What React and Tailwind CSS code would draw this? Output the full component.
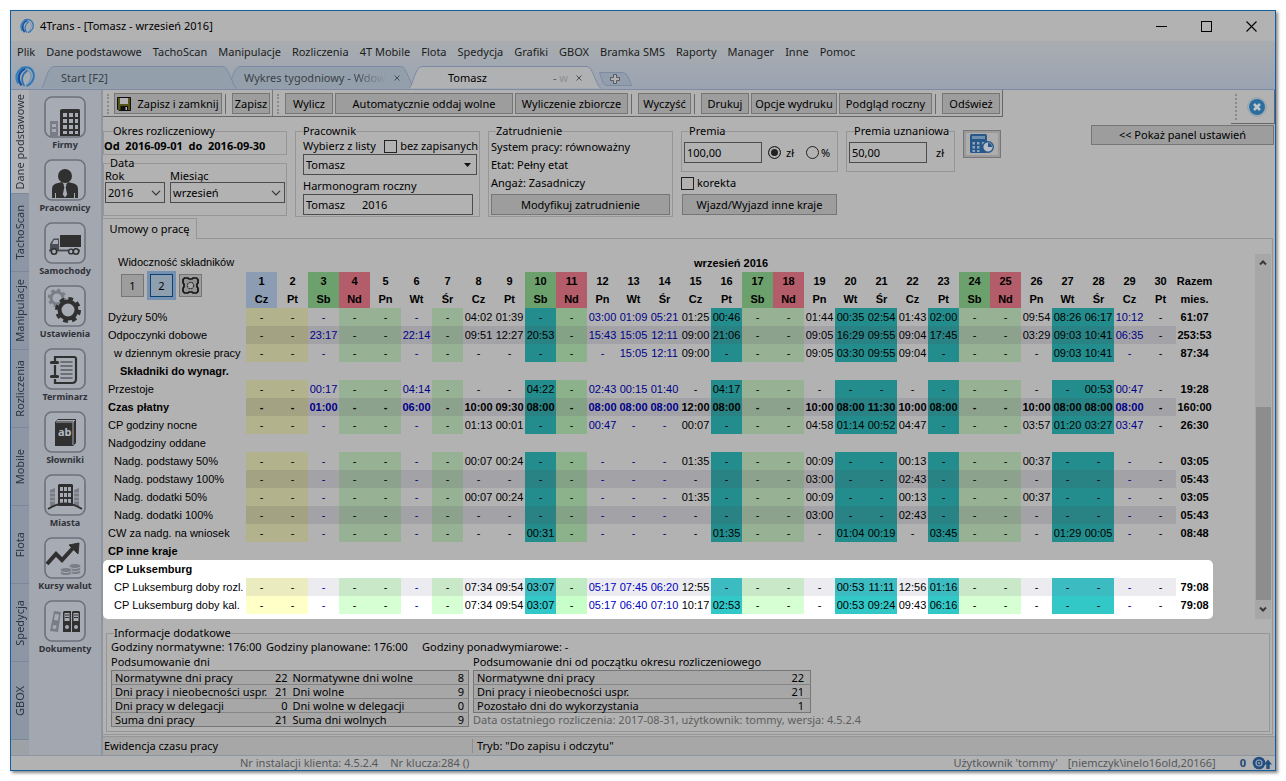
import React from "react";

const UI = "font-['Noto_Sans','Open_Sans',sans-serif]";

const menu = ["Plik", "Dane podstawowe", "TachoScan", "Manipulacje", "Rozliczenia", "4T Mobile", "Flota", "Spedycja", "Grafiki", "GBOX", "Bramka SMS", "Raporty", "Manager", "Inne", "Pomoc"];
const sideTabs = ["TachoScan", "Manipulacje", "Rozliczenia", "Mobile", "Flota", "Spedycja", "GBOX"];

function Logo({ className }) {
  return (
    <svg viewBox="0 0 20 21" className={className} fill="none" aria-hidden="true">
      <path d="M12 4C16 7 17 14 11 20 7 14 8 8 12 4Z" fill="#a3adb8" />
      <path d="M3.500 17.500C-.5 11 2 4.500 8 2" stroke="#3580bd" strokeWidth="2.400" />
      <path d="M6.500 19.500C1.500 12 4 5.500 10.500 2.500" stroke="#164f9c" strokeWidth="2.200" />
      <path d="M9.500 20C5 13.500 7.500 7.500 12.500 4.500" stroke="#2a6fb0" strokeWidth="1.600" />
      <path d="M6 2.500C12-.5 17 2 18.500 7 20 13 16.500 18 11.500 20" stroke="#2f78b6" strokeWidth="2" />
      <path d="M10 3.500C15 3.500 17.500 9 15.500 13 14.500 16 13 18 11.500 19.500" stroke="#5d8fb8" strokeWidth="1" />
    </svg>
  );
}

const D = "#303030";
const G = "#7a7d86";
const F = "#a7abb4";

const modules = [
  ["Firmy", (
    <g>
      <path d="M6 25h8v15H6z" fill={G} />
      <path d="M8 28h4v3H8zM8 33h4v3H8z" fill={F} />
      <path d="M18 13h17l1 1v26H16V14z" fill={D} />
      <path d="M19 17h4v4h-4zM25 17h4v4h-4zM31 17h3v4h-3zM19 23h4v4h-4zM25 23h4v4h-4zM31 23h3v4h-3zM19 29h4v4h-4zM25 29h4v4h-4zM31 29h3v4h-3zM19 35h4v3h-4zM25 35h4v3h-4zM31 35h3v3h-3z" fill={F} />
    </g>
  )],
  ["Pracownicy", (
    <g>
      <circle cx="21" cy="17" r="7" fill={D} />
      <path d="M8 39V30q0-5 6-6l4-1 3 4 3-4 4 1q6 1 6 6v9h-3v-5h-1v5H12v-5h-1v5z" fill={D} />
      <path d="M19.500 25.500h3l-.8 3 1.500 7-2.200 3-2.200-3 1.500-7z" fill={F} />
    </g>
  )],
  ["Samochody", (
    <g>
      <path d="M16 13h21v12H16z" fill={D} />
      <path d="M15 16.500H9.500L6 22v6.500h9z" fill="#4b4e56" />
      <path d="M10 18h4v4H8z" fill={F} />
      <path d="M5 28.500h31" stroke="#45484f" strokeWidth="1.800" />
      <circle cx="10" cy="29.500" r="2.700" fill={F} stroke={D} strokeWidth="1.600" />
      <circle cx="27" cy="29.500" r="2.400" fill={F} stroke={D} strokeWidth="1.400" />
      <circle cx="32" cy="29.500" r="2.700" fill={F} stroke={D} strokeWidth="1.600" />
    </g>
  )],
  ["Ustawienia", (
    <g fill="none">
      <circle cx="13" cy="13" r="6" stroke={G} strokeWidth="3" />
      <circle cx="13" cy="13" r="8" stroke={G} strokeWidth="2.500" strokeDasharray="3.200 3.080" />
      <circle cx="24" cy="25" r="10" fill={F} />
      <circle cx="24" cy="25" r="8.500" stroke={D} strokeWidth="4" />
      <circle cx="24" cy="25" r="11.500" stroke={D} strokeWidth="3" strokeDasharray="4.800 4.230" />
    </g>
  )],
  ["Terminarz", (
    <g>
      <path d="M11 9h19q2 0 2 2v20q0 4-4 4H11z" fill="none" stroke={D} strokeWidth="2.200" />
      <path d="M8 15h6M8 29h6" stroke={F} strokeWidth="4" />
      <path d="M7.500 14.500h6M7.500 28.500h6" stroke={D} strokeWidth="3.200" strokeLinecap="round" />
      <path d="M17 14h11M17 18h11M17 22h11M17 26h11M17 30h11" stroke="#5a5d62" strokeWidth="1.600" strokeLinecap="round" />
    </g>
  )],
  ["Słowniki", (
    <g>
      <path d="M11 11l3-3h18v24l-3 3H11z" fill={D} />
      <path d="M12 11h17v23M29 11l2-2M13 9.500h17" fill="none" stroke={F} strokeWidth="1" />
      <text x="14" y="25" fontSize="11" fontWeight="700" fill="#b4b8c0" className="font-['Noto_Sans',sans-serif]">ab</text>
    </g>
  )],
  ["Miasta", (
    <g>
      <path d="M6 16l5-2v18H6zM30 16l5-2v18h-5z" fill={G} />
      <path d="M6 19h5M6 23h5M6 27h5M30 19h5M30 23h5M30 27h5" stroke={F} strokeWidth="1" />
      <path d="M15 10h13l1 1v21H14V11z" fill={D} />
      <path d="M16 13h3v4h-3zM20 13h3v4h-3zM24 13h3v4h-3zM16 19h3v4h-3zM20 19h3v4h-3zM24 19h3v4h-3zM16 25h3v4h-3zM20 25h3v4h-3zM24 25h3v4h-3z" fill={F} />
      <path d="M4 35q17-11 34 0" fill="none" stroke={D} strokeWidth="2" />
    </g>
  )],
  ["Kursy walut", (
    <g>
      <path d="M3 27l9-10 6 6 11-12" fill="none" stroke={D} strokeWidth="4" />
      <path d="M25 8l10-2-1 11z" fill={D} stroke={D} />
      <g fill={G} stroke={F} strokeWidth="1">
        <ellipse cx="31" cy="35" rx="6" ry="2.500" /><ellipse cx="31" cy="32" rx="6" ry="2.500" /><ellipse cx="31" cy="29" rx="6" ry="2.500" />
        <ellipse cx="22" cy="36" rx="6" ry="2.500" /><ellipse cx="22" cy="33" rx="6" ry="2.500" />
      </g>
    </g>
  )],
  ["Dokumenty", (
    <g>
      <path d="M10 11l7 1-3 20-8-1z" fill={G} />
      <path d="M11 14l4 .6-1 6-4-.6z" fill={F} />
      <circle cx="10.500" cy="27" r="2" fill={F} />
      <path d="M20 11h7v21h-8V12zM29 11h6l1 1v20h-8V12z" fill={D} />
      <path d="M20.500 13h5v8h-5zM29.500 13h5v8h-5z" fill={F} />
      <path d="M21 15h4M21 17.500h4M30 15h4M30 17.500h4" stroke={D} strokeWidth="1" />
      <circle cx="23" cy="27" r="2" fill={F} /><circle cx="32" cy="27" r="2" fill={F} />
    </g>
  )],
];

const weekday = ["Cz", "Pt", "Sb", "Nd", "Pn", "Wt", "Śr"];
const days = Array.from({ length: 30 }, (_, i) => ({ n: i + 1, name: weekday[i % 7] }));

const kinds = "yywggwgwwtcwwwwtggwttwtggwttww".split("");
const blueDays = [3, 6, 12, 13, 14, 29];
const shade = {
  dim: {
    plain: { y: "bg-[#b2b28c]", w: "bg-[#b2b2b2]", g: "bg-[#96b194]", c: "bg-[#8cb28c]", t: "bg-[#238c8c]" },
    stripe: { y: "bg-[#a3a384]", w: "bg-[#a3a3a7]", g: "bg-[#8ca28c]", c: "bg-[#84a386]", t: "bg-[#298385]" },
  },
  lit: {
    plain: { y: "bg-[#ffffc8]", w: "bg-white", g: "bg-[#d7ffd4]", c: "bg-[#c8ffc8]", t: "bg-[#32c8c8]" },
    stripe: { y: "bg-[#ebebc0]", w: "bg-[#ebebf0]", g: "bg-[#c8e8c8]", c: "bg-[#bfebc2]", t: "bg-[#3cbcc0]" },
  },
};

const rows = [
  { label: "Dyżury 50%", v: "8=04:02 9=01:39 12=03:00 13=01:09 14=05:21 15=01:25 16=00:46 19=01:44 20=00:35 21=02:54 22=01:43 23=02:00 26=09:54 27=08:26 28=06:17 29=10:12", sum: "61:07" },
  { label: "Odpoczynki dobowe", stripe: true, v: "3=23:17 6=22:14 8=09:51 9=12:27 10=20:53 12=15:43 13=15:05 14=12:11 15=09:00 16=21:06 19=09:05 20=16:29 21=09:55 22=09:04 23=17:45 26=03:29 27=09:03 28=10:41 29=06:35", sum: "253:53" },
  { label: "w dziennym okresie pracy", pad: "pl-[11px]", v: "13=15:05 14=12:11 15=09:00 19=09:05 20=03:30 21=09:55 22=09:04 27=09:03 28=10:41", sum: "87:34" },
  { label: "Składniki do wynagr.", pad: "pl-[17px]", bold: true },
  { label: "Przestoje", v: "3=00:17 6=04:14 10=04:22 12=02:43 13=00:15 14=01:40 16=04:17 28=00:53 29=00:47", sum: "19:28" },
  { label: "Czas płatny", bold: true, stripe: true, v: "3=01:00 6=06:00 8=10:00 9=09:30 10=08:00 12=08:00 13=08:00 14=08:00 15=12:00 16=08:00 19=10:00 20=08:00 21=11:30 22=10:00 23=08:00 26=10:00 27=08:00 28=08:00 29=08:00", sum: "160:00" },
  { label: "CP godziny nocne", v: "8=01:13 9=00:01 12=00:47 15=00:07 19=04:58 20=01:14 21=00:52 22=04:47 26=03:57 27=01:20 28=03:27 29=03:47", sum: "26:30" },
  { label: "Nadgodziny oddane" },
  { label: "Nadg. podstawy 50%", pad: "pl-[11px]", v: "8=00:07 9=00:24 15=01:35 19=00:09 22=00:13 26=00:37", sum: "03:05" },
  { label: "Nadg. podstawy 100%", pad: "pl-[11px]", stripe: true, v: "19=03:00 22=02:43", sum: "05:43" },
  { label: "Nadg. dodatki 50%", pad: "pl-[11px]", v: "8=00:07 9=00:24 15=01:35 19=00:09 22=00:13 26=00:37", sum: "03:05" },
  { label: "Nadg. dodatki 100%", pad: "pl-[11px]", stripe: true, v: "19=03:00 22=02:43", sum: "05:43" },
  { label: "CW za nadg. na wniosek", v: "10=00:31 16=01:35 20=01:04 21=00:19 23=03:45 27=01:29 28=00:05", sum: "08:48" },
  { label: "CP inne kraje", bold: true },
];

const litRows = [
  { label: "CP Luksemburg", bold: true },
  { label: "CP Luksemburg doby rozl.", pad: "pl-[11px]", stripe: true, v: "8=07:34 9=09:54 10=03:07 12=05:17 13=07:45 14=06:20 15=12:55 20=00:53 21=11:11 22=12:56 23=01:16", sum: "79:08" },
  { label: "CP Luksemburg doby kal.", pad: "pl-[11px]", v: "8=07:34 9=09:54 10=03:07 12=05:17 13=06:40 14=07:10 15=10:17 16=02:53 20=00:53 21=09:24 22=09:43 23=06:16", sum: "79:08" },
];

function Row({ row, lit, first }) {
  const palette = shade[lit ? "lit" : "dim"][row.stripe ? "stripe" : "plain"];
  const side = lit ? "bg-white" : "";
  const values = row.v === undefined ? null : Object.fromEntries(row.v.split(" ").map((p) => p.split("=")));
  return (
    <tr className={`h-[18px] ${row.bold ? "font-bold" : ""}`}>
      <th scope="row" className={`${side} ${first ? "rounded-tl-[5px]" : ""} ${row.bold ? "font-bold" : "font-normal"} text-left`}>
        <div className={row.pad || "pl-[5px]"}>{row.label}</div>
      </th>
      {values
        ? kinds.map((k, i) => (
            <td key={i} className={`${palette[k]} ${blueDays.includes(i + 1) ? (lit ? "text-[#0000c0]" : "text-[#000086]") : ""}`}>
              {values[i + 1] || "-"}
            </td>
          ))
        : <td colSpan={30} className={side} />}
      <td className={`${side} ${first ? "rounded-tr-[5px]" : ""} font-bold`}>{row.sum}</td>
    </tr>
  );
}

function Btn({ children, className = "", label }) {
  return (
    <button type="button" aria-label={label} className={`flex items-center justify-center border border-[#767676] bg-[#9d9d9d] whitespace-nowrap ${className}`}>
      {children}
    </button>
  );
}

function Grip({ className = "h-5" }) {
  return <div className={`w-0 shrink-0 border-l-2 border-dotted border-[#8a8a8a] ${className}`} />;
}

function Sep() {
  return <div className="h-5 w-px bg-[#6a6a6a]" />;
}

function Group({ title, className = "", legend = "ml-2", children }) {
  return (
    <fieldset className={`min-w-0 border border-[#969696] ${className}`}>
      <legend className={`${legend} leading-[14px]`}>{title}</legend>
      {children}
    </fieldset>
  );
}

function Chevron() {
  return (
    <svg viewBox="0 0 10 6" className="pointer-events-none absolute top-2 right-1 h-1.5 w-2.5" aria-hidden="true">
      <path d="M1 .8l4 4 4-4" fill="none" stroke="#333" strokeWidth="1.200" />
    </svg>
  );
}

const field = "h-[21px] border border-[#4c4c4c] bg-[#b2b2b2] px-0.5";
const tick = "size-[13px] shrink-0 appearance-none border border-[#222] checked:bg-[#222]";
const radio = "size-[13px] shrink-0 appearance-none rounded-full border border-[#222] checked:bg-[#222] checked:shadow-[inset_0_0_0_2px_#b2b2b2]";

function TabShape({ w, fill }) {
  return (
    <svg width={w} height="23" viewBox={`0 0 ${w} 23`} className="absolute inset-0" aria-hidden="true">
      <path d={`M0 22.500C4 20 6 .5 13 .5H${w - 14}C${w - 8} .5 ${w - 5} 20 ${w} 22.500`} fill={fill} stroke="#7c8ba3" />
    </svg>
  );
}

function CloseMark({ className }) {
  return (
    <svg viewBox="0 0 6 6" className={`relative size-1.5 shrink-0 ${className}`} aria-hidden="true">
      <path d="M.5.5l5 5M5.500.5l-5 5" stroke="#4c4f55" strokeWidth="1" />
    </svg>
  );
}

const summaryLeft = [
  ["Normatywne dni pracy", 22, "Normatywne dni wolne", 8],
  ["Dni pracy i nieobecności uspr.", 21, "Dni wolne", 9],
  ["Dni pracy w delegacji", 0, "Dni wolne w delegacji", 0],
  ["Suma dni pracy", 21, "Suma dni wolnych", 9],
];
const summaryRight = [
  ["Normatywne dni pracy", 22],
  ["Dni pracy i nieobecności uspr.", 21],
  ["Pozostało dni do wykorzystania", 1],
];

export default function App() {
  return (
    <div className={`flex min-h-screen min-w-[1286px] bg-white p-2.5 text-[11px] leading-[14px] text-black ${UI}`}>
      <div className="flex flex-1 flex-col border border-[#12609f] bg-[#b2b2b2] shadow-[2px_2px_3px_#888]">
        <header className="flex h-[30px] items-center pl-[9px]">
          <Logo className="h-4 w-3.5" />
          <h1 className="ml-1.5 flex-1">4Trans - [Tomasz - wrzesień 2016]</h1>
          <div className="flex items-center gap-[34px] pr-[18px]">
            <button type="button" aria-label="Minimalizuj" className="flex size-[11px] items-center"><span className="h-px w-full bg-black" /></button>
            <button type="button" aria-label="Maksymalizuj" className="size-[11px] border border-black" />
            <button type="button" aria-label="Zamknij" className="size-[11px]">
              <svg viewBox="0 0 11 11"><path d="M.5.5l10 10M10.500.5l-10 10" stroke="#000" strokeWidth="1.100" /></svg>
            </button>
          </div>
        </header>

        <div className="border-b border-[#7c8ba3] bg-linear-to-b from-[#a9adb0] to-[#9aa3b1]">
          <nav className="flex h-[25px] items-start gap-[11px] pt-1 pl-1.5 text-[#1c1c1c]">
            {menu.map((m) => <button type="button" key={m} className="whitespace-nowrap">{m}</button>)}
          </nav>
          <div className="flex h-[23px] pl-1">
            <Logo className="h-[21px] w-5" />
            <div className="ml-1.5 flex items-start text-[#3a3f46]">
              <button type="button" className="relative z-10 flex h-[23px] w-[196px] items-center pl-5">
                <TabShape w={196} fill="#949fac" /><span className="relative">Start [F2]</span>
              </button>
              <button type="button" className="relative -ml-2.5 flex h-[23px] w-[188px] items-center pl-[17px]">
                <TabShape w={188} fill="#949fac" />
                <span className="relative text-left whitespace-nowrap">Wykres tygodniowy - <span className="bg-linear-to-r from-[#3a3f46] to-[#949fac] bg-clip-text text-transparent">Wdow</span></span>
                <CloseMark className="mr-[15px] ml-auto" />
              </button>
              <button type="button" className="relative z-10 -ml-1.5 flex h-[23px] w-[192px] items-center pl-[39px] text-black">
                <TabShape w={192} fill="#b0b1b3" />
                <span className="relative flex-1 text-left">Tomasz</span>
                <span className="relative mr-2 text-[#555]">- <span className="text-[#909090]">w</span></span>
                <CloseMark className="mr-[19px]" />
              </button>
              <button type="button" aria-label="Nowa karta" className="mt-1.5 -ml-0.5">
                <svg width="33" height="14" viewBox="0 0 33 14">
                  <path d="M.5 .5H24Q28 1 30 7L32.500 13.500H8Q4 13 3 8Z" fill="#939eac" stroke="#7c8ba3" />
                  <path d="M14.500 2.500h3v3h3v3h-3v3h-3v-3h-3v-3h3z" fill="#b2b2b2" stroke="#555b63" />
                </svg>
              </button>
            </div>
          </div>
        </div>

        <div className="flex flex-1">
          <nav className="flex w-[18px] shrink-0 flex-col bg-[#9ea1a5] text-[#2a3340]">
            <button type="button" className="flex h-[103px] items-center justify-center bg-[#b0b1b4]"><span className="rotate-180 whitespace-nowrap [writing-mode:vertical-rl]">Dane podstawowe</span></button>
            {sideTabs.map((t) => (
              <button type="button" key={t} className="flex h-[78px] items-center justify-center border-t border-[#7c8798] bg-[#8c96a4]"><span className="rotate-180 [writing-mode:vertical-rl]">{t}</span></button>
            ))}
            <div className="border-t border-[#7c8798]" />
          </nav>

          <aside className="flex w-[74px] shrink-0 flex-col items-center border-r-2 border-[#8d95a2] bg-[#a3a7b0] pt-1.5">
            {modules.map(([name, art]) => (
              <button type="button" key={name} className="flex h-[63px] flex-col items-center text-[9px] font-bold whitespace-nowrap text-[#303238]">
                <svg width="42" height="42" viewBox="0 0 42 42" aria-hidden="true">
                  <rect x="1" y="1" width="40" height="40" rx="7" fill="#a7abb4" stroke="#6c717c" strokeWidth="1.600" />
                  {art}
                </svg>
                <span className="leading-[13px]">{name}</span>
              </button>
            ))}
          </aside>

          <main className="flex min-w-0 flex-1 flex-col">
            <div className="flex h-[34px] items-start justify-between">
              <div className="flex items-start border-r border-b border-[#666] pt-[3px] pr-0.5 pb-px">
                <div className="flex items-center pl-1">
                  <Grip />
                  <Btn className="ml-[5px] h-[21px] w-[108px] gap-1.5">
                    <svg width="14" height="14" viewBox="0 0 14 14"><path d="M.5.500H13.500V13.500H2L.5 12z" fill="#55551a" stroke="#111" /><path d="M3 1h8v6H3z" fill="#b2b2b2" /><path d="M3.500 9h7.500v4.500H3.500z" fill="#111" /><path d="M8.500 10h1.500v3H8.500z" fill="#b2b2b2" /></svg>
                    Zapisz i zamknij
                  </Btn>
                  <div className="mx-[3px]"><Sep /></div>
                  <Btn className="ml-[3px] h-[21px] w-[38px]">Zapisz</Btn>
                </div>
                <div className="-mt-[3px] ml-0.5 -mb-px h-[26px] w-px bg-[#777]" />
                <div className="flex items-center pl-1">
                  <Grip />
                  <Btn className="ml-1.5 h-[21px] w-12">Wylicz</Btn>
                  <Btn className="ml-0.5 h-[21px] w-[178px]">Automatycznie oddaj wolne</Btn>
                  <Btn className="ml-0.5 h-[21px] w-[113px]">Wyliczenie zbiorcze</Btn>
                  <div className="mr-1.5 ml-[3px]"><Sep /></div>
                  <Btn className="h-[21px] w-[53px]">Wyczyść</Btn>
                  <div className="mr-1.5 ml-[3px]"><Sep /></div>
                  <Btn className="h-[21px] w-12">Drukuj</Btn>
                  <Btn className="ml-0.5 h-[21px] w-[86px]">Opcje wydruku</Btn>
                  <Btn className="ml-0.5 h-[21px] w-[93px]">Podgląd roczny</Btn>
                  <div className="mr-1.5 ml-[3px]"><Sep /></div>
                  <Btn className="h-[21px] w-[58px]">Odśwież</Btn>
                </div>
              </div>
              <div className="flex h-[34px] items-center border-r border-b border-[#666] pr-[7px] pl-1">
                <Grip className="h-[26px]" />
                <button type="button" aria-label="Zamknij kartę" className="ml-2.5">
                  <svg width="20" height="20" viewBox="0 0 20 20"><circle cx="10" cy="10" r="9.300" fill="#a9b3ba" stroke="#8f9ba5" strokeWidth=".8" /><circle cx="10" cy="10" r="8" fill="#2b6d9f" /><path d="M7 7l6 6M13 7l-6 6" stroke="#c0c6ca" strokeWidth="2.600" /></svg>
                </button>
              </div>
            </div>

            <div className="flex items-start gap-2">
              <div className="flex w-[184px] flex-col gap-px">
                <Group title="Okres rozliczeniowy" legend="ml-[9px]">
                  <p className="h-4 pt-px font-bold whitespace-pre">Od  2016-09-01  do  2016-09-30</p>
                </Group>
                <Group title="Data" legend="ml-1.5">
                  <div className="flex gap-[5px] px-px pb-3">
                    <label className="w-[60px] leading-3">Rok
                      <span className="relative block"><select className={`${field} w-full appearance-none`}><option>2016</option></select><Chevron /></span>
                    </label>
                    <label className="flex-1 leading-3">Miesiąc
                      <span className="relative block"><select className={`${field} w-full appearance-none`}><option>wrzesień</option></select><Chevron /></span>
                    </label>
                  </div>
                </Group>
              </div>

              <Group title="Pracownik" className="w-[185px]" legend="ml-[7px]">
                <div className="flex flex-col pb-px pl-[7px]">
                  <div className="flex h-4 items-center justify-between pr-px">
                    <label htmlFor="worker">Wybierz z listy</label>
                    <label className="flex items-center gap-[3px] whitespace-nowrap"><input type="checkbox" className={tick} />bez zapisanych</label>
                  </div>
                  <div className="relative mr-0.5">
                    <select id="worker" className={`${field} w-full appearance-none`}><option>Tomasz</option></select>
                    <svg viewBox="0 0 7 4" className="pointer-events-none absolute top-[9px] right-1.5 h-1 w-[7px]"><path d="M0 0h7L3.500 4z" fill="#111" /></svg>
                  </div>
                  <label htmlFor="plan" className="mt-1 mb-px">Harmonogram roczny</label>
                  <input id="plan" defaultValue={"Tomasz\u00a0\u00a0\u00a0\u00a0\u00a0\u00a02016"} className={`${field} mr-1.5`} />
                </div>
              </Group>

              <Group title="Zatrudnienie" className="w-[185px]" legend="ml-[7px]">
                <div className="px-0.5 pb-px leading-[18px]">
                  <p>System pracy: równoważny</p>
                  <p>Etat: Pełny etat</p>
                  <p>Angaż: Zasadniczy</p>
                  <Btn className="mt-0.5 h-[21px] w-full">Modyfikuj zatrudnienie</Btn>
                </div>
              </Group>

              <div className="w-[157px]">
                <Group title="Premia" legend="ml-[7px]">
                  <div className="flex items-center px-0.5 pt-1 pb-2">
                    <input aria-label="Premia" defaultValue="100,00" className={`${field} w-[78px]`} />
                    <label className="ml-1.5 flex items-center gap-[5px]"><input type="radio" name="unit" defaultChecked className={radio} />zł</label>
                    <label className="ml-3 flex items-center gap-[2px]"><input type="radio" name="unit" className={radio} />%</label>
                  </div>
                </Group>
                <label className="mt-1 flex items-center gap-[3px]"><input type="checkbox" className={tick} />korekta</label>
                <Btn className="mt-1 ml-px h-[21px] w-[155px]">Wjazd/Wyjazd inne kraje</Btn>
              </div>

              <Group title="Premia uznaniowa" className="w-[109px] whitespace-nowrap" legend="ml-[7px]">
                <div className="flex items-center px-0.5 pt-1 pb-2">
                  <input aria-label="Premia uznaniowa" defaultValue="50,00" className={`${field} w-[78px]`} />
                  <span className="ml-[9px]">zł</span>
                </div>
              </Group>

              <button type="button" aria-label="Kalkulator czasu" className="mt-1.5 flex h-7 w-[38px] items-center justify-center border border-[#767676] bg-[#adadad] shadow-[inset_0_0_0_2px_#9a9a9a]">
                <svg width="24" height="22" viewBox="0 0 24 22"><rect x="0" y="1" width="17" height="19" rx="1.500" fill="#28578a" /><path d="M2 3h13v3H2z" fill="#6f8eac" /><path d="M2.500 9h2.500v2.500H2.500zM7 9h2.500v2.500H7zM12 9h2.500v2.500H12zM2.500 13h2.500v2.500H2.500zM7 13h2.500v2.500H7zM2.500 17h2.500v2H2.500zM7 17h2.500v2H7z" fill="#8da3b8" /><circle cx="18" cy="14" r="5.300" fill="#b5bec6" stroke="#28578a" strokeWidth="1.400" /><path d="M18 10a4 4 0 0 1 4 4h-4z" fill="#28578a" /></svg>
              </button>

              <div className="flex flex-1 justify-end pt-px pr-px">
                <Btn className="h-5 w-[183px]">&lt;&lt; Pokaż panel ustawień</Btn>
              </div>
            </div>

            <div className="mt-px flex items-end">
              <button type="button" className="h-[21px] w-[94px] border-t border-r border-[#969696]">Umowy o pracę</button>
              <div className="mr-0.5 h-px flex-1 bg-[#969696]" />
            </div>

            <section className="mr-0.5 flex flex-1 flex-col border-r border-b border-[#969696] pt-[15px]">
              <div className="flex justify-between pr-px">
                <table className="w-[1110px] table-fixed border-separate border-spacing-0 text-center font-['Liberation_Sans',Arial,sans-serif] leading-[18px] [&_td]:p-0 [&_th]:p-0">
                  <colgroup>
                    <col className="w-[143px]" />
                    {days.map((d) => <col key={d.n} className="w-[31px]" />)}
                    <col className="w-[37px]" />
                  </colgroup>
                  <thead>
                    <tr className="h-[18px]">
                      <td rowSpan={3} className="text-left align-top">
                        <div className="pl-[15px] leading-4">Widoczność składników</div>
                        <div className={`flex items-center gap-1.5 pt-1 pl-[18px] ${UI}`}>
                          <Btn className="size-[23px]">1</Btn>
                          <button type="button" className="size-[23px] border border-[#0c4271] bg-[#8ea0b0] shadow-[0_0_0_3px_#7590b0]">2</button>
                          <Btn className="size-[23px]" label="Ustawienia składników">
                            <svg width="17" height="17" viewBox="0 0 17 17" className="shrink-0" fill="none" aria-hidden="true">
                              <path d="M2.500 1H6l1 1h3l1-1h3.500L16 2.500V6l-1 1v3l1 1v3.500L14.500 16H11l-1-1H7l-1 1H2.500L1 14.500V11l1-1V7L1 6V2.500z" fill="#939393" stroke="#111" strokeWidth="1.700" />
                              <circle cx="8.500" cy="8.500" r="3.200" fill="#a8a8a8" stroke="#333" strokeWidth="1.200" strokeDasharray="2 .6" />
                            </svg>
                          </Btn>
                        </div>
                      </td>
                      <th colSpan={30}><div className="pl-10">wrzesień 2016</div></th>
                      <td />
                    </tr>
                    {["n", "name"].map((key) => (
                      <tr key={key} className="h-[18px]">
                        {days.map((d) => (
                          <th key={d.n} className={d.n === 1 ? "bg-[#8c9db3]" : d.name === "Sb" ? "bg-[#6ca06c]" : d.name === "Nd" ? "bg-[#b25d69]" : ""}>{d[key]}</th>
                        ))}
                        <th>{key === "n" ? "Razem" : "mies."}</th>
                      </tr>
                    ))}
                  </thead>
                  <tbody>{rows.map((r) => <Row key={r.label} row={r} />)}</tbody>
                  <tbody>
                    {litRows.map((r, i) => <Row key={r.label} row={r} lit first={i === 0} />)}
                    <tr className="h-[5px] leading-[0]"><td colSpan={32} className="rounded-b-[5px] bg-white" /></tr>
                  </tbody>
                </table>
                <div className="flex w-4 flex-col items-center bg-[#a7a7a7]">
                  <svg viewBox="0 0 8 5" className="my-1.5 h-[5px] w-2"><path d="M1 4.500l3-3 3 3" fill="none" stroke="#383838" strokeWidth="2" /></svg>
                  <div className="flex-1" />
                  <div className="h-[193px] w-[15px] bg-[#8d8d8d]" />
                  <svg viewBox="0 0 8 5" className="my-[7px] h-[5px] w-2"><path d="M1 .5l3 3 3-3" fill="none" stroke="#383838" strokeWidth="2" /></svg>
                </div>
              </div>

              <Group title="Informacje dodatkowe" className="mr-0.5 mb-0.5 ml-[3px] mt-[7px]" legend="ml-[7px]">
                <div className="px-1 pb-1">
                  <p className="flex"><span className="w-[155px]">Godziny normatywne: 176:00</span><span className="w-[156px]">Godziny planowane: 176:00</span><span>Godziny ponadwymiarowe: -</span></p>
                  <div className="mt-px flex gap-1">
                    <div>
                      <h2>Podsumowanie dni</h2>
                      <table className="mt-px w-[358px] border border-[#767676] bg-[#a7a7a7]">
                        <tbody>
                          {summaryLeft.map((r) => (
                            <tr key={r[0]} className="border-b border-[#858585] last:border-b-0">
                              <td className="pl-[3px] leading-[13px] whitespace-nowrap">{r[0]}</td><td className="text-right leading-[13px]">{r[1]}</td>
                              <td className="w-[141px] pl-[5px] leading-[13px]">{r[2]}</td><td className="w-10 pr-1 text-right leading-[13px]">{r[3]}</td>
                            </tr>
                          ))}
                        </tbody>
                      </table>
                    </div>
                    <div>
                      <h2>Podsumowanie dni od początku okresu rozliczeniowego</h2>
                      <table className="mt-px w-[338px] border border-[#767676] bg-[#a7a7a7]">
                        <tbody>
                          {summaryRight.map((r) => (
                            <tr key={r[0]} className="border-b border-[#858585] last:border-b-0">
                              <td className="pl-[3px] leading-[13px]">{r[0]}</td><td className="pr-1.5 text-right leading-[13px]">{r[1]}</td>
                            </tr>
                          ))}
                        </tbody>
                      </table>
                      <p className="text-[#5e5e5e]">Data ostatniego rozliczenia: 2017-08-31, użytkownik: tommy, wersja: 4.5.2.4</p>
                    </div>
                  </div>
                </div>
              </Group>
            </section>

            <div className="mt-px flex h-[19px] items-center border-t border-[#969696] bg-[#a7a7a7]">
              <span className="w-[369px] pl-px">Ewidencja czasu pracy</span>
              <span className="border-l border-[#8d8d8d] pl-1">Tryb: "Do zapisu i odczytu"</span>
            </div>
          </main>
        </div>

        <footer className="flex h-[15px] items-center border-t border-[#8d95a2] pr-[3px] pl-[229px] text-[#55585c]">
          <span>Nr instalacji klienta: 4.5.2.4</span><span className="ml-3 flex-1">Nr klucza:284 ()</span>
          <span>Użytkownik 'tommy'</span><span className="ml-2.5">[niemczyk\inelo16old,20166]</span>
          <span className="mr-1.5 ml-6 font-bold text-[#1c4878]">0</span>
          <svg width="20" height="14" viewBox="0 0 20 14"><circle cx="7" cy="7" r="6.300" fill="#234e80" /><circle cx="7" cy="7" r="3" fill="none" stroke="#9aa9ba" strokeWidth="1.200" /><circle cx="7" cy="7" r="1" fill="#9aa9ba" /><path d="M16 3.500l4 5h-2.300v4.500h-3.400V8.500H12z" fill="#234e80" /></svg>
        </footer>
      </div>
    </div>
  );
}
